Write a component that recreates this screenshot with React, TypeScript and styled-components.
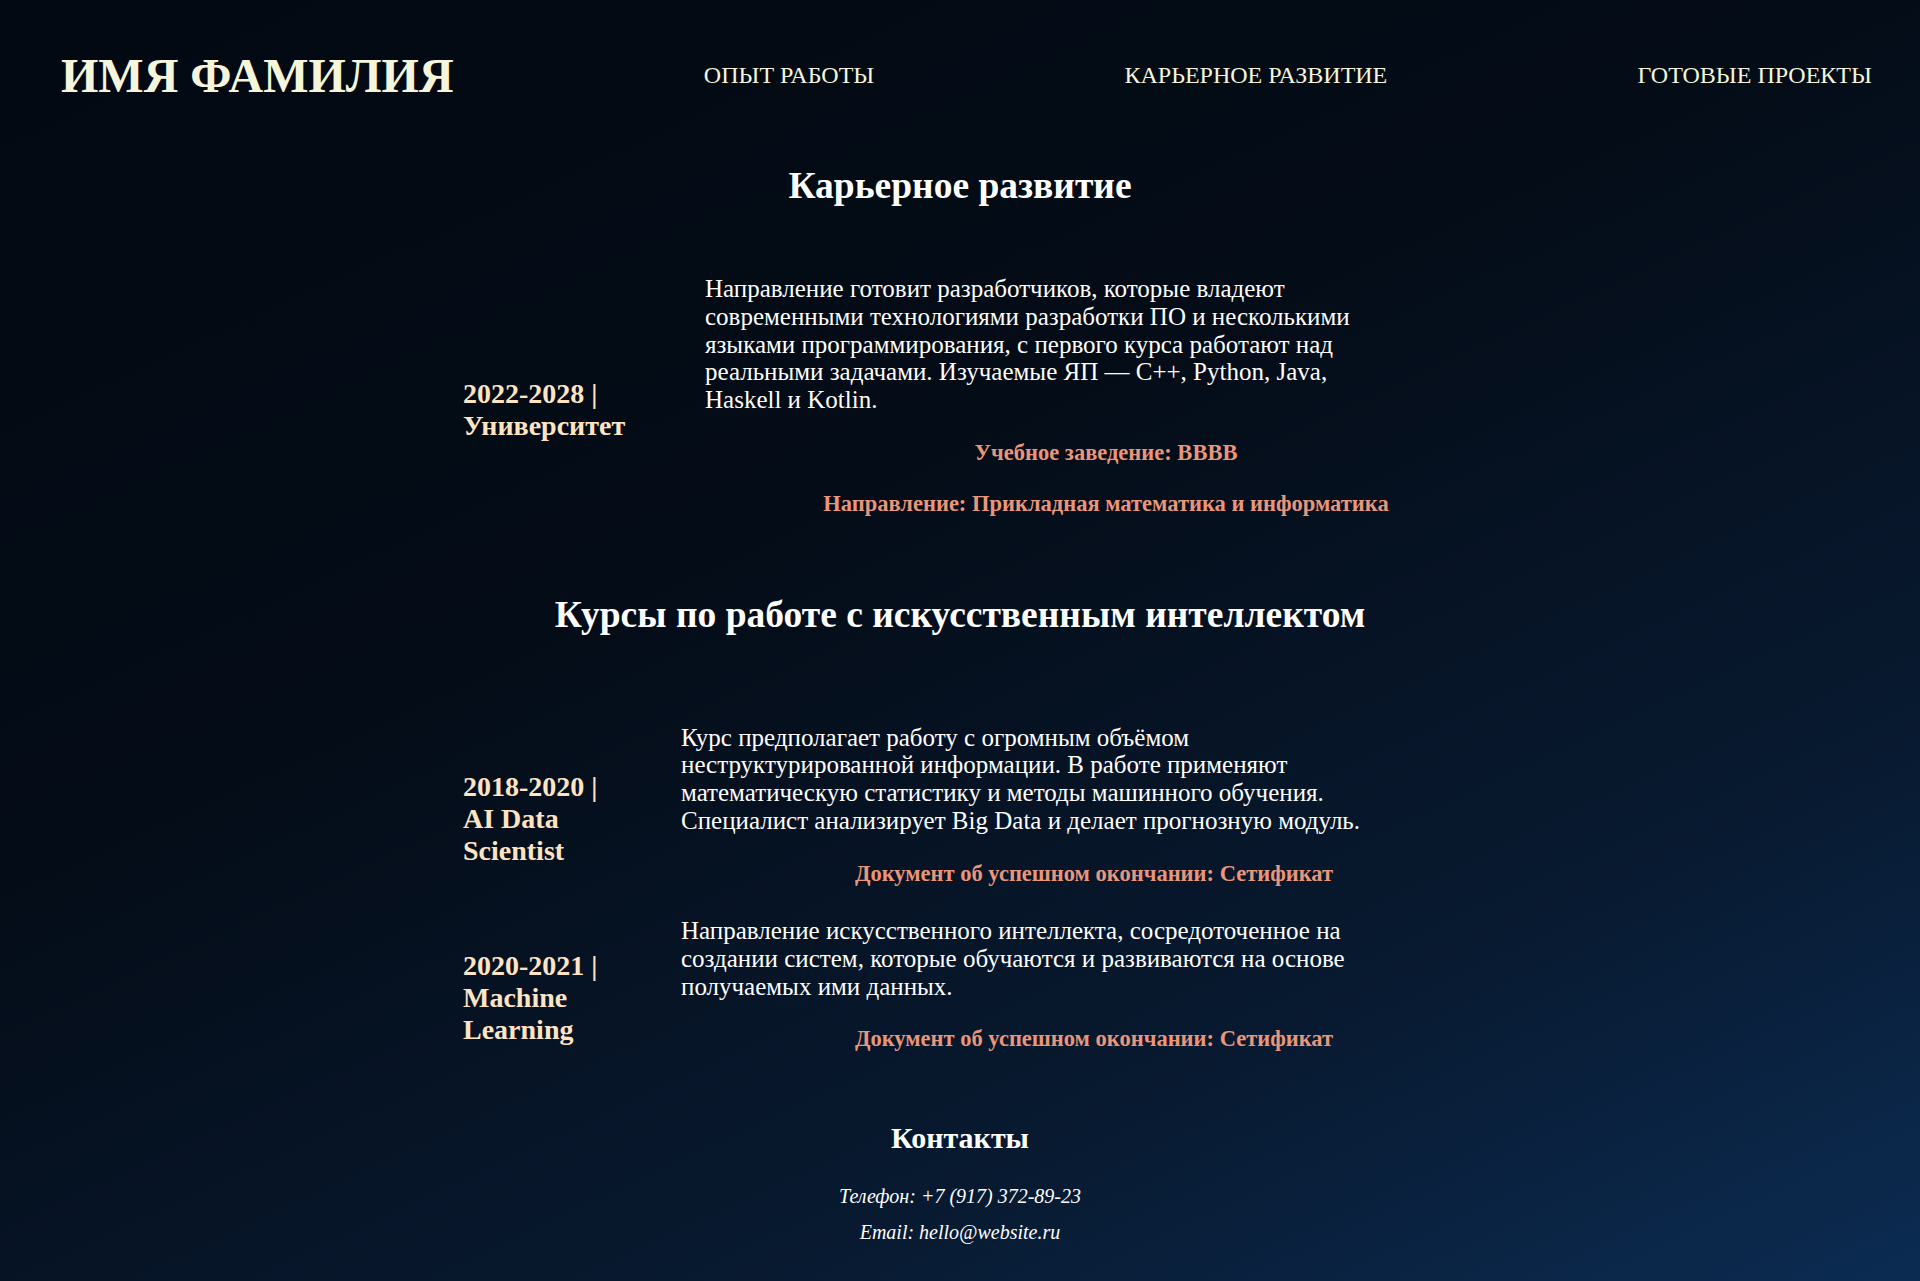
import styled, { createGlobalStyle } from 'styled-components';

const GlobalStyle = createGlobalStyle`
  html,
  body {
    margin: 0;
    padding: 0;
  }

  body {
    font-family: 'Liberation Serif', 'Times New Roman', serif;
    background: #030912;
  }
`;

const Page = styled.div`
  min-height: 100vh;
  box-sizing: border-box;
  padding-bottom: 35px;
  color: #ffffff;
  background: linear-gradient(155deg, #030912 0%, #040c17 40%, #081a31 75%, #0c2c53 100%);
`;

const Header = styled.header`
  display: flex;
  align-items: center;
  justify-content: space-between;
  padding: 48px 48px 0 61px;
`;

const Logo = styled.h1`
  margin: 0;
  font-size: 48px;
  line-height: 55px;
  font-weight: 700;
  text-transform: uppercase;
  color: beige;
`;

const NavLink = styled.a`
  font-size: 24px;
  color: beige;
  text-decoration: none;
  text-transform: uppercase;
  cursor: pointer;
`;

const Main = styled.main`
  max-width: 1094px;
  margin: 0 auto;
`;

const SectionTitle = styled.h2<{ $top: number; $bottom: number }>`
  margin: ${(p) => p.$top}px 0 ${(p) => p.$bottom}px;
  font-size: 37.5px;
  line-height: 46px;
  font-weight: 700;
  text-align: center;
`;

const Timeline = styled.div<{ $dateWidth: number }>`
  display: grid;
  grid-template-columns: ${(p) => p.$dateWidth}px 1fr;
  column-gap: 82px;
  row-gap: 3px;
  align-items: center;
  padding-left: 50px;
`;

const Period = styled.h3`
  margin: 0;
  font-size: 28px;
  font-weight: 700;
  color: bisque;
`;

const Details = styled.div`
  padding-bottom: 28px;
`;

const Description = styled.p`
  max-width: 700px;
  margin: 0;
  font-size: 25px;
  line-height: 27.8px;
`;

const Note = styled.p`
  margin: 26px 0 0;
  font-size: 22.5px;
  line-height: 25.3px;
  font-weight: 700;
  text-align: center;
  color: darksalmon;
`;

const Contacts = styled.footer`
  display: flex;
  flex-direction: column;
  align-items: center;
  margin-top: 40px;
`;

const ContactsTitle = styled.h2`
  margin: 0 0 28px;
  font-size: 30px;
  line-height: 36.8px;
  font-weight: 700;
`;

const ContactLine = styled.p`
  margin: 0 0 13px;
  font-size: 20px;
  font-style: italic;
`;

type Entry = {
  period: string;
  text: string;
  notes: string[];
};

const university: Entry[] = [
  {
    period: '2022-2028 | Университет',
    text: 'Направление готовит разработчиков, которые владеют современными технологиями разработки ПО и несколькими языками программирования, с первого курса работают над реальными задачами. Изучаемые ЯП — C++, Python, Java, Haskell и Kotlin.',
    notes: ['Учебное заведение: BBBB', 'Направление: Прикладная математика и информатика'],
  },
];

const courses: Entry[] = [
  {
    period: '2018-2020 | AI Data Scientist',
    text: 'Курс предполагает работу с огромным объёмом неструктурированной информации. В работе применяют математическую статистику и методы машинного обучения. Специалист анализирует Big Data и делает прогнозную модуль.',
    notes: ['Документ об успешном окончании: Сетификат'],
  },
  {
    period: '2020-2021 | Machine Learning',
    text: 'Направление искусственного интеллекта, сосредоточенное на создании систем, которые обучаются и развиваются на основе получаемых ими данных.',
    notes: ['Документ об успешном окончании: Сетификат'],
  },
];

const TimelineRows = ({ items }: { items: Entry[] }) => (
  <>
    {items.map((item) => (
      <div key={item.period} style={{ display: 'contents' }}>
        <Period>{item.period}</Period>
        <Details>
          <Description>{item.text}</Description>
          {item.notes.map((note) => (
            <Note key={note}>{note}</Note>
          ))}
        </Details>
      </div>
    ))}
  </>
);

export default function App() {
  return (
    <>
      <GlobalStyle />
      <Page>
        <Header>
          <Logo>Имя Фамилия</Logo>
          <NavLink>Опыт работы</NavLink>
          <NavLink>Карьерное развитие</NavLink>
          <NavLink>Готовые проекты</NavLink>
        </Header>

        <Main>
          <SectionTitle $top={60} $bottom={66}>
            Карьерное развитие
          </SectionTitle>
          <Timeline $dateWidth={160}>
            <TimelineRows items={university} />
          </Timeline>

          <SectionTitle $top={47} $bottom={86}>
            Курсы по работе с искусственным интеллектом
          </SectionTitle>
          <Timeline $dateWidth={136}>
            <TimelineRows items={courses} />
          </Timeline>

          <Contacts>
            <ContactsTitle>Контакты</ContactsTitle>
            <ContactLine>Телефон: +7 (917) 372-89-23</ContactLine>
            <ContactLine>Email: hello@website.ru</ContactLine>
          </Contacts>
        </Main>
      </Page>
    </>
  );
}
